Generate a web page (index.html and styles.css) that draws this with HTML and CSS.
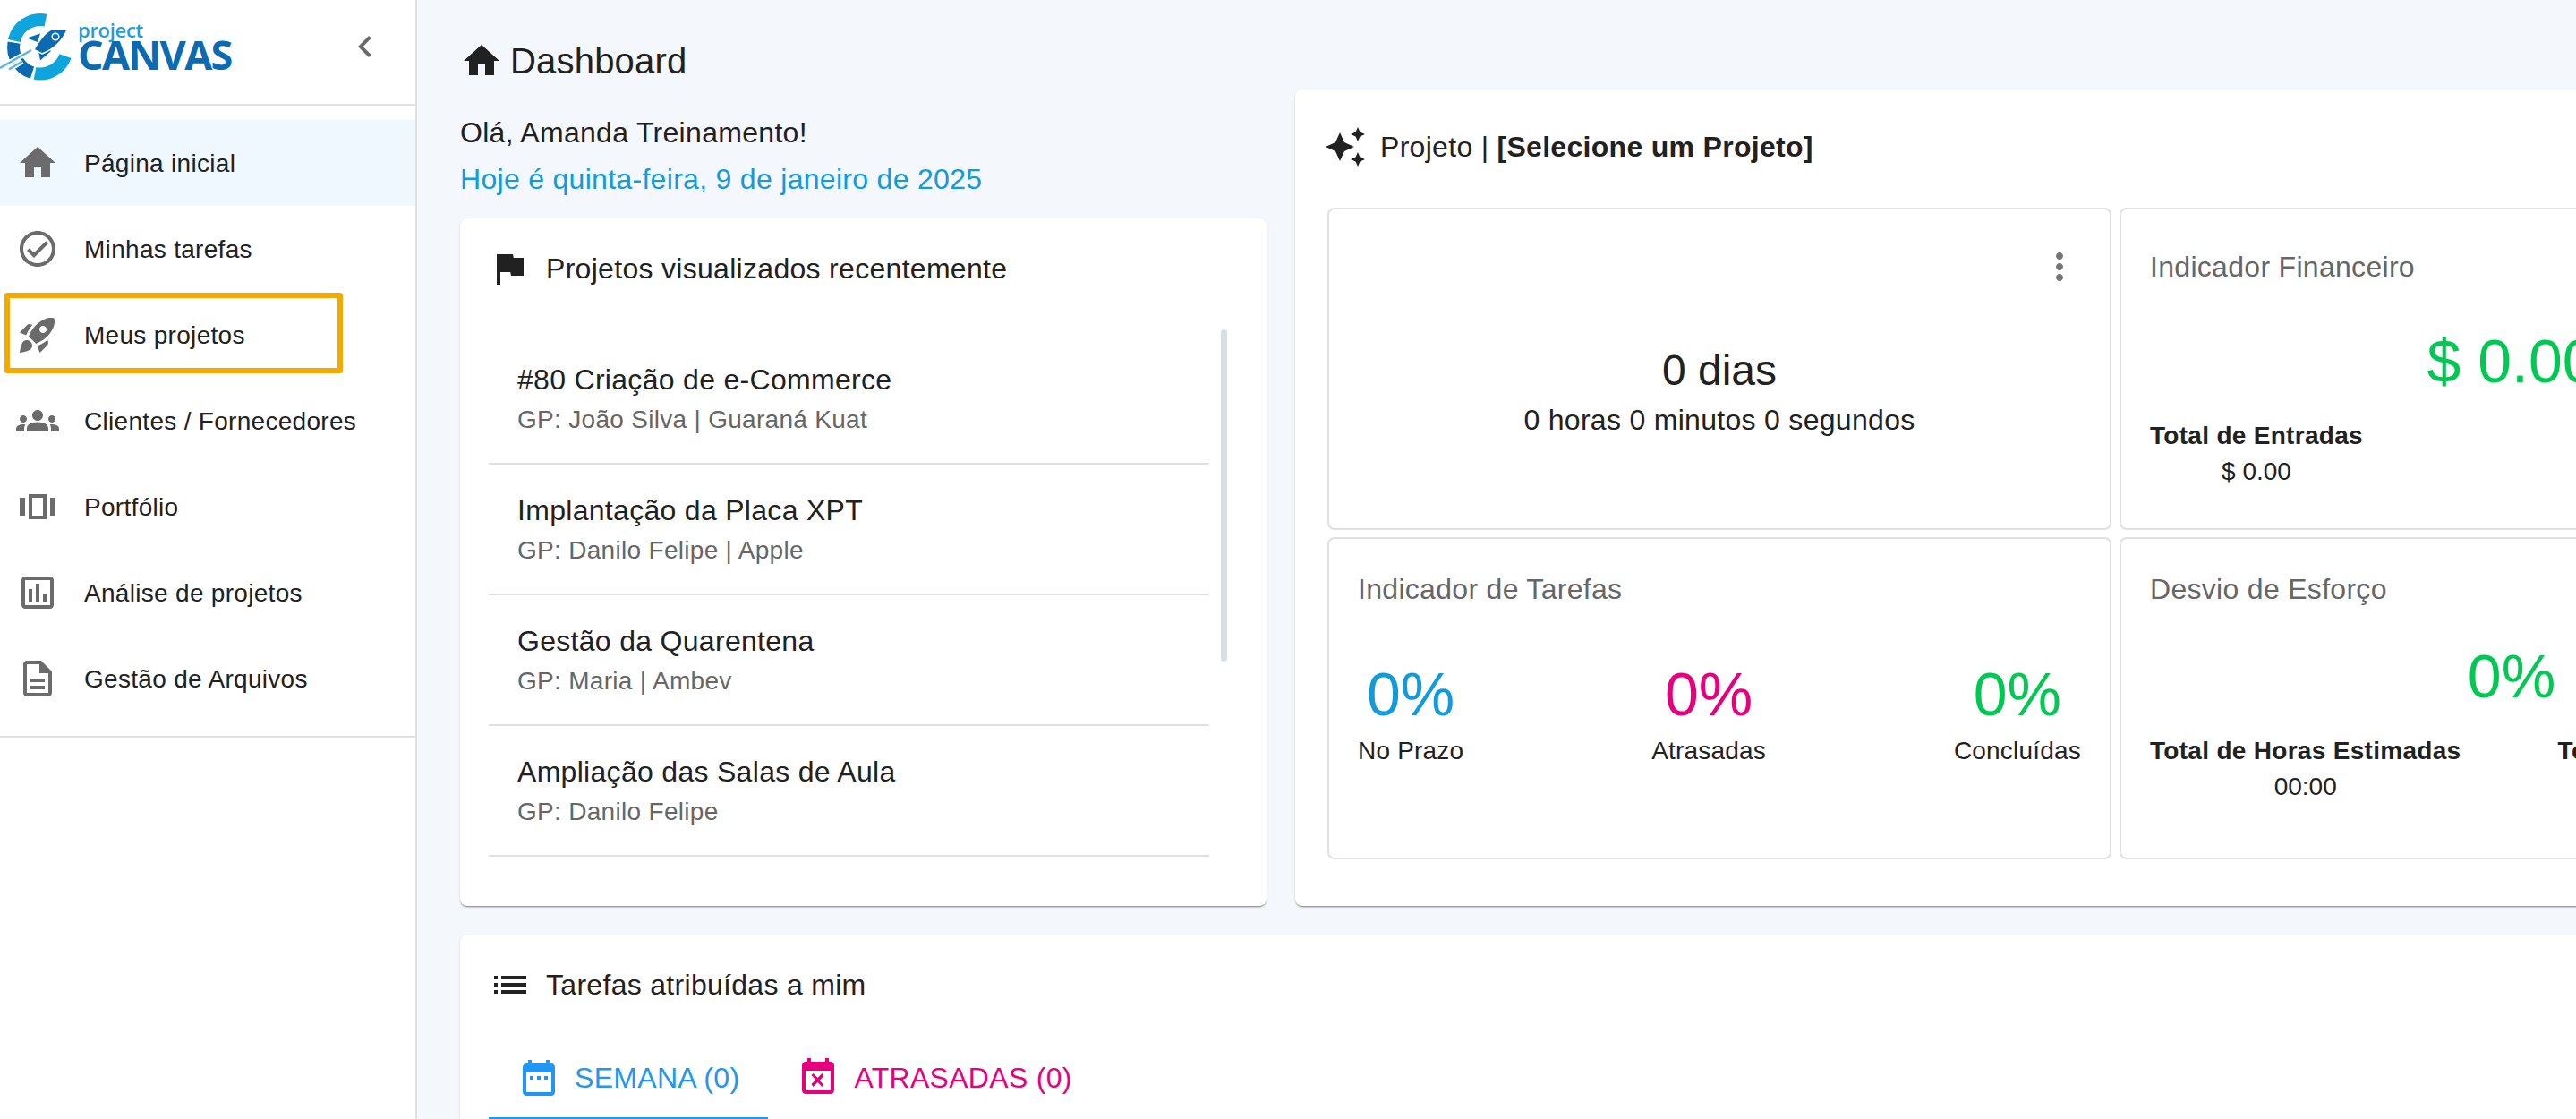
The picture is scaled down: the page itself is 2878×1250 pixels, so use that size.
FILE: index.html
```html
<!DOCTYPE html>
<html lang="pt-BR">
<head>
<meta charset="utf-8">
<title>Project Canvas - Dashboard</title>
<link rel="stylesheet" href="styles.css">
</head>
<body>
<div class="app">
  <aside class="sidebar">
    <div class="brand">
      <div class="logo">
        <svg class="logo-mark" viewBox="0 0 80 80" width="80" height="80">
          <g fill="none" stroke-width="14">
            <path d="M51 8.600A30 30 0 0 0 15.800 31.600" stroke="#0ea5de"/>
            <path d="M15.500 33.600A30 30 0 0 0 36 67.200" stroke="#0b6ab0"/>
            <path d="M39 68A30 30 0 0 0 73 48.600" stroke="#0ea5de"/>
          </g>
          <path d="M0 62L35 42M10 63.500L25 54.500" stroke="#fff" stroke-width="6"/>
          <path d="M0 62L35 42M10 63.500L25 54.500" stroke="#5fb4e0" stroke-width="2.500"/>
          <path d="M30 28.500L45 23.500L42 33zM43 43L45 53.500L57 43L52 38z" fill="#0b6ab0"/>
          <path d="M75 19.500L60 18C53 20 46 27 38 41.500L47 46C60 41 69 33 75 19.500z" fill="#0b6ab0" stroke="#fff" stroke-width="1.500"/>
          <circle cx="62" cy="27" r="3.800" fill="#0b6ab0" stroke="#fff" stroke-width="1.500"/>
        </svg>
        <div class="logo-text">
          <span class="logo-small">project</span>
          <span class="logo-big">CANVAS</span>
        </div>
      </div>
      <svg class="icon collapse" viewBox="0 0 24 24"><path d="M15.410 7.410L14 6l-6 6 6 6 1.410-1.410L10.830 12z"/></svg>
    </div>
    <nav class="nav">
      <a class="nav-item active"><svg class="icon" viewBox="0 0 24 24"><path d="M10 20v-6h4v6h5v-8h3L12 3 2 12h3v8z"/></svg><span>Página inicial</span></a>
      <a class="nav-item"><svg class="icon" viewBox="0 0 24 24"><path d="M16.590 7.580L10 14.170l-2.590-2.580L6 13l4 4 8-8zM12 2C6.480 2 2 6.480 2 12s4.480 10 10 10 10-4.480 10-10S17.520 2 12 2zm0 18c-4.420 0-8-3.580-8-8s3.580-8 8-8 8 3.580 8 8-3.580 8-8 8z"/></svg><span>Minhas tarefas</span></a>
      <a class="nav-item highlighted"><svg class="icon" viewBox="0 0 24 24"><path d="M9.190 6.350c-2.040 2.290-3.440 5.580-3.570 5.890L2 10.690l4.050-4.050c.47-.47 1.150-.68 1.810-.55l1.330.26zM11.170 17s3.740-1.550 5.890-3.700c5.400-5.400 4.500-9.620 4.210-10.570-.95-.3-5.170-1.190-10.570 4.210C8.550 9.090 7 12.830 7 12.830L11.170 17zm6.480-2.190c-2.290 2.040-5.580 3.440-5.890 3.570L13.310 22l4.050-4.050c.47-.47.68-1.150.55-1.810l-.26-1.330zM9 18c0 .83-.34 1.580-.88 2.120C6.940 21.300 2 22 2 22s.7-4.940 1.880-6.120C4.420 15.340 5.170 15 6 15c1.660 0 3 1.340 3 3zm4-9c0-1.100.9-2 2-2s2 .9 2 2-.9 2-2 2-2-.9-2-2z"/></svg><span>Meus projetos</span><i class="marker"></i></a>
      <a class="nav-item"><svg class="icon" viewBox="0 0 24 24"><path d="M12 12.750c1.630 0 3.070.39 4.240.9 1.080.48 1.760 1.560 1.760 2.730V18H6v-1.610c0-1.180.68-2.260 1.760-2.730 1.170-.52 2.610-.91 4.240-.91zM4 13c1.100 0 2-.9 2-2s-.9-2-2-2-2 .9-2 2 .9 2 2 2zm1.130 1.100c-.37-.06-.74-.1-1.130-.1-.99 0-1.930.21-2.780.58C.48 14.900 0 15.620 0 16.430V18h4.500v-1.610c0-.83.23-1.610.63-2.290zM20 13c1.100 0 2-.9 2-2s-.9-2-2-2-2 .9-2 2 .9 2 2 2zm4 3.430c0-.81-.48-1.530-1.220-1.850-.85-.37-1.790-.58-2.780-.58-.39 0-.76.04-1.130.1.4.68.63 1.460.63 2.290V18H24v-1.570zM12 6c1.660 0 3 1.340 3 3s-1.340 3-3 3-3-1.340-3-3 1.340-3 3-3z"/></svg><span>Clientes / Fornecedores</span></a>
      <a class="nav-item"><svg class="icon" viewBox="0 0 24 24"><path fill-rule="evenodd" d="M2 7h3v10H2zM19 7h3v10h-3zM7 5h10v14H7zM9 7v10h6V7z"/></svg><span>Portfólio</span></a>
      <a class="nav-item"><svg class="icon" viewBox="0 0 24 24"><path d="M19 3H5c-1.100 0-2 .9-2 2v14c0 1.100.9 2 2 2h14c1.100 0 2-.9 2-2V5c0-1.100-.9-2-2-2zm0 16H5V5h14v14zM7 10h2v7H7zm4-3h2v10h-2zm4 6h2v4h-2z"/></svg><span>Análise de projetos</span></a>
      <a class="nav-item"><svg class="icon" viewBox="0 0 24 24"><path d="M8 16h8v2H8zm0-4h8v2H8zm6-10H6c-1.100 0-2 .9-2 2v16c0 1.100.89 2 1.990 2H18c1.100 0 2-.9 2-2V8l-6-6zm4 18H6V4h7v5h5v11z"/></svg><span>Gestão de Arquivos</span></a>
    </nav>
  </aside>

  <main class="main">
    <header class="page-head">
      <svg class="icon dark" viewBox="0 0 24 24"><path d="M10 20v-6h4v6h5v-8h3L12 3 2 12h3v8z"/></svg>
      <h1>Dashboard</h1>
    </header>

    <div class="top-row">
      <section class="left-col">
        <p class="hello">Olá, Amanda Treinamento!</p>
        <p class="today">Hoje é quinta-feira, 9 de janeiro de 2025</p>
        <div class="card recent">
          <div class="card-title">
            <svg class="icon dark" viewBox="0 0 24 24"><path d="M14.400 6L14 4H5v17h2v-7h5.600l.4 2h7V6z"/></svg>
            <h2>Projetos visualizados recentemente</h2>
          </div>
          <div class="list-wrap">
            <ul class="list">
              <li><strong>#80 Criação de e-Commerce</strong><span>GP: João Silva | Guaraná Kuat</span></li>
              <li><strong>Implantação da Placa XPT</strong><span>GP: Danilo Felipe | Apple</span></li>
              <li><strong>Gestão da Quarentena</strong><span>GP: Maria | Ambev</span></li>
              <li><strong>Ampliação das Salas de Aula</strong><span>GP: Danilo Felipe</span></li>
            </ul>
            <div class="thumb"></div>
          </div>
        </div>
      </section>

      <section class="card project">
        <div class="project-head">
          <svg class="icon dark" viewBox="0 0 24 24"><path d="M19 9l1.250-2.750L23 5l-2.750-1.250L19 1l-1.250 2.750L15 5l2.750 1.250L19 9zm-7.500.5L9 4 6.500 9.500 1 12l5.500 2.500L9 20l2.500-5.500L17 12l-5.500-2.500zM19 15l-1.250 2.750L15 19l2.750 1.250L19 23l1.250-2.750L23 19l-2.750-1.250L19 15z"/></svg>
          <h2>Projeto | <b>[Selecione um Projeto]</b></h2>
        </div>
        <div class="tiles">
          <div class="tile timer">
            <svg class="icon more" viewBox="0 0 24 24"><path d="M12 8c1.100 0 2-.9 2-2s-.9-2-2-2-2 .9-2 2 .9 2 2 2zm0 2c-1.100 0-2 .9-2 2s.9 2 2 2 2-.9 2-2-.9-2-2-2zm0 6c-1.100 0-2 .9-2 2s.9 2 2 2 2-.9 2-2-.9-2-2-2z"/></svg>
            <div class="days">0 dias</div>
            <div class="time">0 horas 0 minutos 0 segundos</div>
          </div>
          <div class="tile finance">
            <h3>Indicador Financeiro</h3>
            <div class="value green">$ 0.00</div>
            <div class="totals">
              <div class="total"><b>Total de Entradas</b><span>$ 0.00</span></div>
              <div class="total"><b>Total de Saídas</b><span>$ 0.00</span></div>
            </div>
          </div>
          <div class="tile tasks">
            <h3>Indicador de Tarefas</h3>
            <div class="stats">
              <div class="stat"><div class="value blue">0%</div><span>No Prazo</span></div>
              <div class="stat"><div class="value pink">0%</div><span>Atrasadas</span></div>
              <div class="stat"><div class="value green">0%</div><span>Concluídas</span></div>
            </div>
          </div>
          <div class="tile effort">
            <h3>Desvio de Esforço</h3>
            <div class="value green">0%</div>
            <div class="totals">
              <div class="total"><b>Total de Horas Estimadas</b><span>00:00</span></div>
              <div class="total"><b>Total de Horas Realizadas</b><span>00:00</span></div>
            </div>
          </div>
        </div>
      </section>
    </div>

    <section class="card assigned">
      <div class="card-title">
        <svg class="icon dark" viewBox="0 0 24 24"><path d="M3 13h2v-2H3v2zm0 4h2v-2H3v2zm0-8h2V7H3v2zm4 4h14v-2H7v2zm0 4h14v-2H7v2zM7 7v2h14V7H7z"/></svg>
        <h2>Tarefas atribuídas a mim</h2>
      </div>
      <div class="tabs">
        <div class="tab tab-week">
          <svg class="icon" viewBox="0 0 24 24"><path d="M9 11H7v2h2v-2zm4 0h-2v2h2v-2zm4 0h-2v2h2v-2zm2-7h-1V2h-2v2H8V2H6v2H5c-1.110 0-1.990.9-1.990 2L3 20c0 1.100.89 2 2 2h14c1.100 0 2-.9 2-2V6c0-1.100-.9-2-2-2zm0 16H5V9h14v11z"/></svg>
          <span>SEMANA (0)</span>
        </div>
        <div class="tab tab-late">
          <svg class="icon" viewBox="0 0 24 24"><path d="M9.310 17l2.440-2.440L14.190 17l1.060-1.060-2.440-2.440 2.440-2.440L14.190 9.500l-2.440 2.440L9.310 9.500l-1.060 1.060 2.440 2.440-2.440 2.440L9.310 17zM19 3h-1V1h-2v2H8V1H6v2H5c-1.110 0-1.990.9-1.990 2L3 19c0 1.100.89 2 2 2h14c1.100 0 2-.9 2-2V5c0-1.100-.9-2-2-2zm0 16H5V8h14v11z"/></svg>
          <span>ATRASADAS (0)</span>
        </div>
      </div>
    </section>
  </main>
</div>
</body>
</html>
```

FILE: styles.css
```css
* { box-sizing: border-box; }
html, body { margin: 0; height: 100%; overflow: hidden; }
body {
  font-family: "Liberation Sans", Arial, sans-serif;
  color: #212121;
  background: #f4f7fc;
  width: 2878px;
  height: 1250px;
}
h1, h2, h3, p, ul { margin: 0; padding: 0; font-weight: 400; }
ul { list-style: none; }

.app { display: flex; width: 2878px; height: 1250px; overflow: hidden; }

.icon { width: 48px; height: 48px; flex: none; fill: #6b6b6b; display: block; }
.icon.dark { fill: #212121; }

/* sidebar */
.sidebar { width: 466px; flex: none; background: #fff; border-right: 2px solid #e0e0e0; }
.brand {
  height: 118px;
  border-bottom: 2px solid #e0e0e0;
  display: flex;
  align-items: flex-start;
  justify-content: space-between;
  padding: 0 32px 0 0;
}
.logo { display: flex; align-items: flex-start; padding-top: 14px; }
.logo-mark { flex: none; display: block; }
.logo-text { display: flex; flex-direction: column; margin: 8px 0 0 7px; font-family: "Open Sans", sans-serif; font-weight: 700; }
.logo-small { font-size: 22px; line-height: 22px; color: #18a0dc; font-weight: 600; letter-spacing: -0.3px; }
.logo-big { font-size: 45px; line-height: 34px; color: #0b6ab0; letter-spacing: -1.6px; }
.collapse { margin-top: 28px; }

.nav { padding: 16px 0; border-bottom: 2px solid #e0e0e0; }
.nav-item {
  height: 96px;
  display: flex;
  align-items: center;
  gap: 28px;
  padding-left: 18px;
  font-size: 28px;
  letter-spacing: 0.3px;
  position: relative;
}
.nav-item span { padding-top: 2px; }
.nav-item.active { background: #eff7ff; }
.marker {
  position: absolute;
  left: 5px;
  top: 1px;
  width: 378px;
  height: 90px;
  border: 6px solid #f5a800;
  border-radius: 3px;
}

/* main */
.main { flex: 1; min-width: 0; padding-left: 48px; }
.page-head { height: 100px; padding-top: 44px; display: flex; align-items: flex-start; gap: 8px; }
.page-head h1 { font-size: 40px; line-height: 48px; letter-spacing: 0.2px; }

.top-row { display: flex; gap: 32px; align-items: flex-start; width: 2765px; }
.left-col { width: 901px; flex: none; padding-top: 28px; }
.hello, .today { font-size: 32px; line-height: 40px; letter-spacing: 0.3px; }
.today { color: #129bdb; margin-top: 12px; }

.card {
  background: #fff;
  border-radius: 8px;
  box-shadow: 0 2px 2px -1px rgba(0,0,0,.45), 0 1px 3px rgba(0,0,0,.1);
}
.recent { margin-top: 24px; height: 768px; padding: 32px 0 0 31px; }
.card-title { display: flex; align-items: center; gap: 17px; }
.card-title h2 { font-size: 32px; line-height: 40px; letter-spacing: 0.3px; }

.list-wrap { display: flex; margin-top: 49px; padding-left: 1px; }
.list { width: 805px; flex: none; }
.list li { height: 146px; padding: 31px 0 0 32px; border-bottom: 2px solid #e0e0e0; }
.list strong { display: block; font-weight: 400; font-size: 32px; line-height: 40px; letter-spacing: 0.3px; }
.list span { display: block; font-size: 28px; line-height: 40px; margin-top: 5px; color: #666; letter-spacing: 0.3px; }
.thumb { width: 7px; height: 371px; margin: -5px 0 0 13px; background: #d6e0e4; border-radius: 4px; }

.project { width: 1832px; height: 912px; flex: none; padding: 0 36px 0 36px; }
.project-head { height: 132px; padding-top: 40px; margin-left: -4px; display: flex; align-items: flex-start; gap: 15px; }
.project-head h2 { font-size: 32px; line-height: 48px; letter-spacing: 0.3px; }
.project-head b { font-weight: 700; }

.tiles { display: grid; grid-template-columns: 876px 876px; grid-template-rows: 360px 360px; column-gap: 9px; row-gap: 8px; }
.tile { border: 2px solid #e0e0e0; border-radius: 8px; padding: 38px 32px 0; display: flex; flex-direction: column; }
.tile h3 { font-size: 32px; line-height: 36px; color: #666; letter-spacing: 0.3px; }
.value { font-size: 68px; line-height: 76px; text-align: center; }
.green { color: #00c853; }
.blue { color: #129bdb; }
.pink { color: #e6007e; }

.timer { padding-top: 40px; align-items: center; }
.more { align-self: flex-end; fill: #757575; }
.days { font-size: 48px; line-height: 60px; margin-top: 62px; }
.time { font-size: 32px; line-height: 40px; margin-top: 5px; letter-spacing: 0.3px; }

.finance { padding-top: 46px; }
.finance .value { margin-top: 49px; }
.finance .totals { margin-top: 26px; }
.effort .value { margin-top: 41px; }
.effort .totals { margin-top: 26px; }

.totals { display: flex; justify-content: space-between; }
.total { display: flex; flex-direction: column; align-items: center; font-size: 28px; line-height: 40px; }
.total b { font-weight: 700; letter-spacing: 0.3px; }

.stats { display: flex; justify-content: space-between; margin-top: 61px; }
.stat { display: flex; flex-direction: column; align-items: center; font-size: 28px; line-height: 40px; }
.stat span { margin-top: 6px; letter-spacing: 0.2px; }

.assigned { margin-top: 32px; width: 2765px; height: 600px; padding: 32px 0 0 32px; }
.assigned .card-title { gap: 16px; }
.tabs { display: flex; margin-top: 56px; }
.tab { display: flex; align-items: center; gap: 16px; padding: 0 32px 20px; font-size: 32px; line-height: 48px; letter-spacing: 0.3px; border-bottom: 2px solid transparent; }
.tab-week { color: #2196f3; border-bottom-color: #2196f3; }
.tab-week .icon { fill: #2196f3; }
.tab-late { color: #e6007e; }
.tab-late .icon { fill: #e6007e; }
```
